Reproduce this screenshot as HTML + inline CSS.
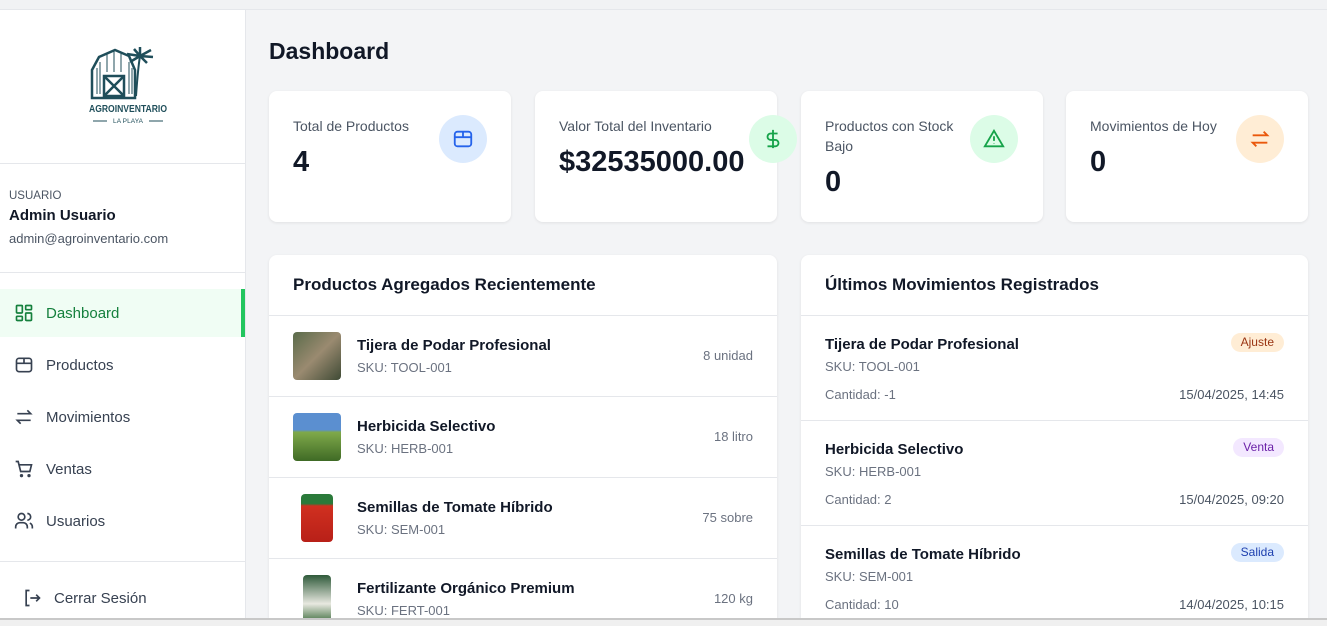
<!DOCTYPE html>
<html><head><meta charset="utf-8"><style>
*{box-sizing:border-box;margin:0;padding:0}
html,body{width:1327px;height:626px;overflow:hidden}
body{background:#f3f4f6;font-family:"Liberation Sans",sans-serif;color:#111827;position:relative}
.top{position:absolute;left:0;top:0;width:1327px;height:10px;background:#f1f2f4;border-bottom:1px solid #e5e7eb}
.side{position:absolute;left:0;top:10px;width:246px;height:608px;background:#fff;border-right:1px solid #e5e7eb}
.bot{position:absolute;left:0;top:618px;width:1327px;height:8px;background:#f0f0f0;border-top:2px solid #c8c8c8;z-index:5}
.hr{position:absolute;left:0;width:245px;height:1px;background:#e5e7eb}
.nav{position:absolute;left:0;width:245px;height:48px;display:flex;align-items:center;padding-left:14px;font-size:15px;color:#374151}
.nav svg{margin-right:12px}
.nav.act{background:#f0fdf4;color:#15803d;border-right:4px solid #22c55e}
.card{position:absolute;top:91px;width:242px;height:131px;background:#fff;border-radius:8px;box-shadow:0 1px 3px rgba(0,0,0,.08)}
.card .l{position:absolute;left:24px;top:25px;font-size:14px;color:#4b5563;line-height:20px;width:140px}
.card .v{position:absolute;left:24px;font-size:29px;font-weight:bold;color:#111827}
.ic{position:absolute;width:48px;height:48px;border-radius:50%;display:flex;align-items:center;justify-content:center}
.panel{position:absolute;top:255px;width:508px;height:363px;background:#fff;border-radius:8px 8px 0 0;box-shadow:0 1px 3px rgba(0,0,0,.08);overflow:hidden}
.ph{height:61px;border-bottom:1px solid #e5e7eb;padding:20px 24px;font-size:17px;font-weight:bold;color:#111827}
.row{position:relative;height:81px;border-bottom:1px solid #e5e7eb}
.th{position:absolute;left:24px;top:16px;width:48px;height:48px;border-radius:4px}
.nm{position:absolute;left:88px;top:21px;font-size:15px;font-weight:bold;color:#111827}
.sk{position:absolute;left:88px;top:44px;font-size:13px;color:#6b7280}
.qt{position:absolute;right:24px;top:32px;font-size:13px;color:#6b7280}
.mr{position:relative;height:105px;border-bottom:1px solid #e5e7eb}
.mr .nm{left:24px;top:20px}.mr .sk{left:24px;top:43px}
.cq{position:absolute;left:24px;top:71px;font-size:13px;color:#6b7280}
.dt{position:absolute;right:24px;top:71px;font-size:13px;color:#4b5563}
.bd{position:absolute;right:24px;top:17px;font-size:12px;padding:3px 10px;border-radius:10px;line-height:13px}
</style></head><body>
<div class="top"></div>
<div class="side">
 <svg style="position:absolute;left:83px;top:28px" width="90" height="90" viewBox="0 0 90 90">
  <g fill="none" stroke="#1f4e5a" stroke-width="2.5">
   <path d="M9 60V32l7-13 16-7 14 6 6 14v28z"/>
   <rect x="21" y="38" width="20" height="20"/><path d="M21 38l20 20M41 38L21 58"/>
  </g>
  <g stroke="#1f4e5a" stroke-width="1" fill="none"><path d="M14 30v26M17 24v32M46 24v32M49 30v26M24 16v18M31 13v21M38 14v20"/></g>
  <path d="M53 58c1-14 2-28 4-40" stroke="#1f4e5a" stroke-width="2" fill="none"/>
  <path d="M57 18l-13-2M57 18l-10 6M57 18l11-6M57 18l13 1M57 18l7 7M57 18l0-9M57 18l-6-7" stroke="#1f4e5a" stroke-width="2.5"/>
  <text x="45" y="74" font-size="10" font-weight="bold" fill="#1f4e5a" text-anchor="middle" textLength="78" lengthAdjust="spacingAndGlyphs" font-family="Liberation Sans">AGROINVENTARIO</text>
  <text x="45" y="85" font-size="6.5" fill="#1f4e5a" text-anchor="middle" textLength="30" font-family="Liberation Sans">LA PLAYA</text>
  <path d="M10 83h14M66 83h14" stroke="#1f4e5a"/>
 </svg>
 <div class="hr" style="top:153px"></div>
 <div style="position:absolute;left:9px;top:180px;font-size:11.5px;color:#4b5563">USUARIO</div>
 <div style="position:absolute;left:9px;top:197px;font-size:15px;font-weight:bold">Admin Usuario</div>
 <div style="position:absolute;left:9px;top:221px;font-size:13px;color:#4b5563">admin@agroinventario.com</div>
 <div class="hr" style="top:262px"></div>
 <div class="nav act" style="top:279px"><svg width="20" height="20" viewBox="0 0 24 24" fill="none" stroke="#15803d" stroke-width="2"><rect x="3" y="3" width="7" height="9" rx="1"/><rect x="14" y="3" width="7" height="5" rx="1"/><rect x="14" y="12" width="7" height="9" rx="1"/><rect x="3" y="16" width="7" height="5" rx="1"/></svg>Dashboard</div>
 <div class="nav" style="top:331px"><svg width="20" height="20" viewBox="0 0 24 24" fill="none" stroke="#374151" stroke-width="2"><rect x="3" y="4" width="18" height="16" rx="3"/><path d="M3 10h18M12 4v6"/></svg>Productos</div>
 <div class="nav" style="top:383px"><svg width="20" height="20" viewBox="0 0 24 24" fill="none" stroke="#374151" stroke-width="2"><path d="M4 8h16l-4-4M20 16H4l4 4"/></svg>Movimientos</div>
 <div class="nav" style="top:435px"><svg width="20" height="20" viewBox="0 0 24 24" fill="none" stroke="#374151" stroke-width="2"><path d="M2 3h3l3 12h11l2-8H6"/><circle cx="9" cy="20" r="1"/><circle cx="18" cy="20" r="1"/></svg>Ventas</div>
 <div class="nav" style="top:487px"><svg width="20" height="20" viewBox="0 0 24 24" fill="none" stroke="#374151" stroke-width="2"><circle cx="9" cy="7" r="4"/><path d="M2 21v-2a5 5 0 015-5h4a5 5 0 015 5v2M16 3a4 4 0 010 8M22 21v-2a5 5 0 00-3-4.5"/></svg>Usuarios</div>
 <div class="hr" style="top:551px"></div>
 <div class="nav" style="top:564px;padding-left:22px"><svg width="20" height="20" viewBox="0 0 24 24" fill="none" stroke="#374151" stroke-width="2"><path d="M9 3H5v18h4M10 12h11M17 8l4 4-4 4"/></svg>Cerrar Sesión</div>
</div>
<div style="position:absolute;left:269px;top:38px;font-size:23px;font-weight:bold">Dashboard</div>

<div class="card" style="left:269px"><div class="l">Total de Productos</div><div class="v" style="top:55px">4</div>
 <div class="ic" style="left:170px;top:24px;background:#dbeafe"><svg width="22" height="22" viewBox="0 0 24 24" fill="none" stroke="#2563eb" stroke-width="2"><rect x="3" y="4" width="18" height="16" rx="3"/><path d="M3 10h18M12 4v6"/></svg></div></div>
<div class="card" style="left:535px"><div class="l" style="width:180px">Valor Total del Inventario</div><div class="v" style="top:55px">$32535000.00</div>
 <div class="ic" style="left:214px;top:24px;background:#dcfce7"><svg width="22" height="22" viewBox="0 0 24 24" fill="none" stroke="#16a34a" stroke-width="2"><path d="M12 2v20M17 6H9.5a3.5 3.5 0 000 7h5a3.5 3.5 0 010 7H6"/></svg></div></div>
<div class="card" style="left:801px"><div class="l">Productos con Stock Bajo</div><div class="v" style="top:75px">0</div>
 <div class="ic" style="left:169px;top:24px;background:#dcfce7"><svg width="22" height="22" viewBox="0 0 24 24" fill="none" stroke="#16a34a" stroke-width="2"><path d="M12 3L2 20h20z"/><path d="M12 9v5M12 17v.5"/></svg></div></div>
<div class="card" style="left:1066px"><div class="l">Movimientos de Hoy</div><div class="v" style="top:55px">0</div>
 <div class="ic" style="left:170px;top:24px;background:#ffedd5"><svg width="22" height="22" viewBox="0 0 24 24" fill="none" stroke="#ea580c" stroke-width="2"><path d="M4 8h16l-4-4M20 16H4l4 4"/></svg></div></div>

<div class="panel" style="left:269px"><div class="ph">Productos Agregados Recientemente</div>
 <div class="row"><div class="th" style="background:linear-gradient(135deg,#5a6b4a,#9a8a70 50%,#3f4a35)"></div><div class="nm">Tijera de Podar Profesional</div><div class="sk">SKU: TOOL-001</div><div class="qt">8 unidad</div></div>
 <div class="row"><div class="th" style="background:linear-gradient(#5b8fd0 0 35%,#7fa94a 40%,#3f6a25)"></div><div class="nm">Herbicida Selectivo</div><div class="sk">SKU: HERB-001</div><div class="qt">18 litro</div></div>
 <div class="row"><div class="th" style="left:32px;width:32px;background:linear-gradient(#2a7a3a 0 20%,#d03020 25%,#b82018)"></div><div class="nm">Semillas de Tomate Híbrido</div><div class="sk">SKU: SEM-001</div><div class="qt">75 sobre</div></div>
 <div class="row"><div class="th" style="left:34px;width:28px;background:linear-gradient(#2f5a3a,#e8e8e0 60%,#3a6a3a)"></div><div class="nm">Fertilizante Orgánico Premium</div><div class="sk">SKU: FERT-001</div><div class="qt">120 kg</div></div>
</div>
<div class="panel" style="left:801px;width:507px"><div class="ph">Últimos Movimientos Registrados</div>
 <div class="mr"><div class="nm">Tijera de Podar Profesional</div><div class="sk">SKU: TOOL-001</div><div class="bd" style="background:#ffedd5;color:#9a3412">Ajuste</div><div class="cq">Cantidad: -1</div><div class="dt">15/04/2025, 14:45</div></div>
 <div class="mr"><div class="nm">Herbicida Selectivo</div><div class="sk">SKU: HERB-001</div><div class="bd" style="background:#f3e8ff;color:#6b21a8">Venta</div><div class="cq">Cantidad: 2</div><div class="dt">15/04/2025, 09:20</div></div>
 <div class="mr"><div class="nm">Semillas de Tomate Híbrido</div><div class="sk">SKU: SEM-001</div><div class="bd" style="background:#dbeafe;color:#1e40af">Salida</div><div class="cq">Cantidad: 10</div><div class="dt">14/04/2025, 10:15</div></div>
</div>
<div class="bot"></div>
</body></html>
